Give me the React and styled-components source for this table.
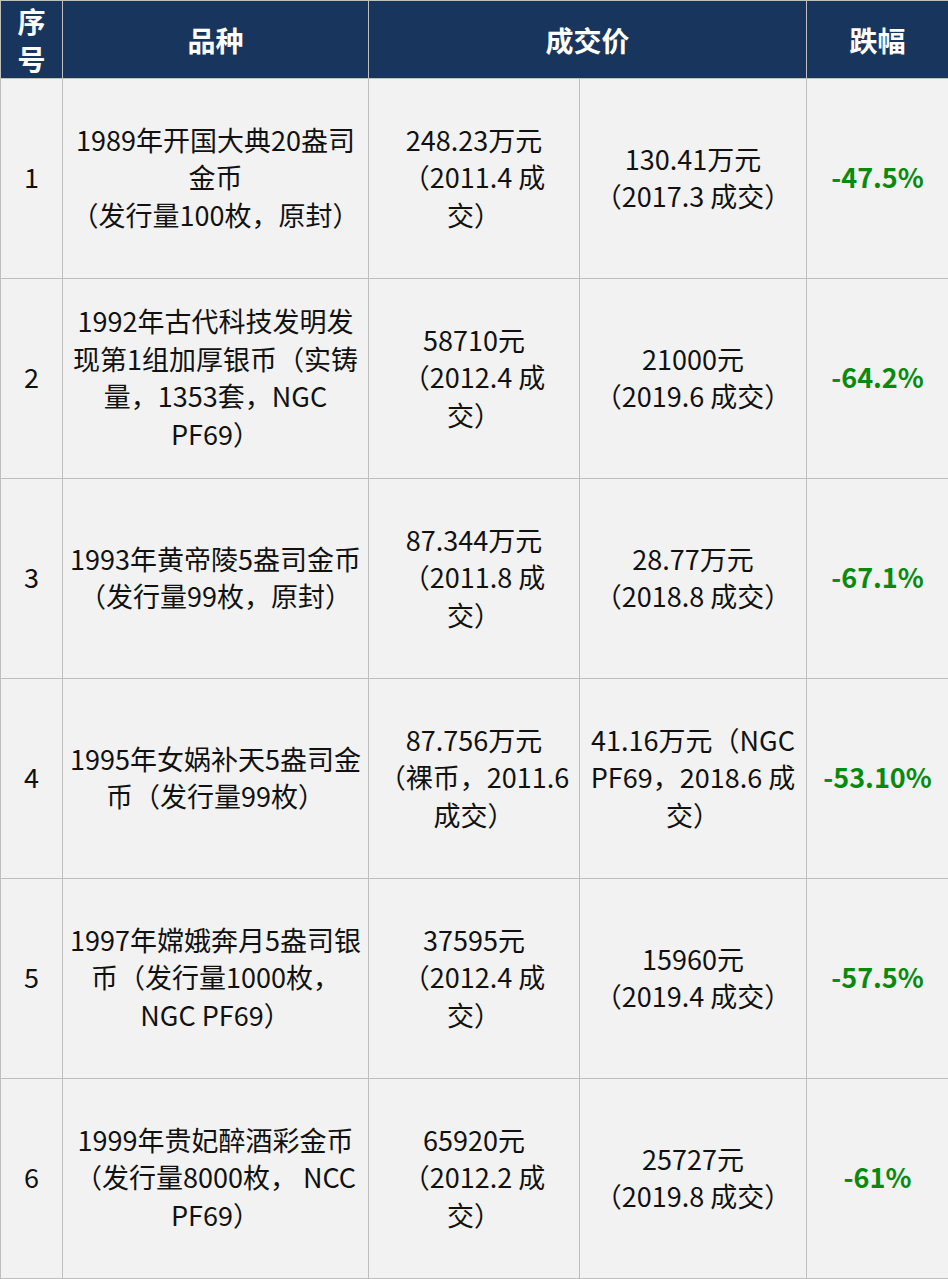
import React from 'react';
import styled, { createGlobalStyle } from 'styled-components';

const GlobalStyle = createGlobalStyle`
  html, body {
    margin: 0;
    padding: 0;
    background: #ffffff;
  }
  body {
    font-family: "Noto Sans CJK SC", "Noto Sans", sans-serif;
  }
`;

const Table = styled.table`
  width: 948px;
  table-layout: fixed;
  border-collapse: collapse;
  font-size: 27px;
  line-height: 37.5px;
  color: #111111;
`;

const HeadCell = styled.th`
  height: 77px;
  padding: 0;
  background: #18365d;
  color: #ffffff;
  font-size: 28px;
  font-weight: 700;
  text-align: center;
  vertical-align: middle;
  border: 1px solid #bfbfbf;
  line-height: ${(p) => (p.$tight ? '38px' : '40px')};
`;

const Cell = styled.td`
  height: 196px;
  padding: 0 0 3px;
  background: #f2f2f2;
  text-align: center;
  vertical-align: middle;
  border: 1px solid #bfbfbf;
  white-space: nowrap;
  font-weight: ${(p) => (p.$bold ? 700 : 400)};
  color: ${(p) => (p.$green ? '#078a0e' : '#111111')};
`;

const Line = styled.div`
  white-space: nowrap;
`;

const rows = [
  {
    name: ['1989年开国大典20盎司', '金币', '（发行量100枚，原封）'],
    before: ['248.23万元', '（2011.4 成', '交）'],
    after: ['130.41万元', '（2017.3 成交）'],
    change: '-47.5%',
  },
  {
    name: ['1992年古代科技发明发', '现第1组加厚银币（实铸', '量，1353套，NGC', 'PF69）'],
    before: ['58710元', '（2012.4 成', '交）'],
    after: ['21000元', '（2019.6 成交）'],
    change: '-64.2%',
  },
  {
    name: ['1993年黄帝陵5盎司金币', '（发行量99枚，原封）'],
    before: ['87.344万元', '（2011.8 成', '交）'],
    after: ['28.77万元', '（2018.8 成交）'],
    change: '-67.1%',
  },
  {
    name: ['1995年女娲补天5盎司金', '币（发行量99枚）'],
    before: ['87.756万元', '（裸币，2011.6', '成交）'],
    after: ['41.16万元（NGC', 'PF69，2018.6 成', '交）'],
    change: '-53.10%',
  },
  {
    name: ['1997年嫦娥奔月5盎司银', '币（发行量1000枚，', 'NGC PF69）'],
    before: ['37595元', '（2012.4 成', '交）'],
    after: ['15960元', '（2019.4 成交）'],
    change: '-57.5%',
  },
  {
    name: ['1999年贵妃醉酒彩金币', '（发行量8000枚， NCC', 'PF69）'],
    before: ['65920元', '（2012.2 成', '交）'],
    after: ['25727元', '（2019.8 成交）'],
    change: '-61%',
  },
];

function Lines({ items }) {
  return items.map((t, i) => <Line key={i}>{t}</Line>);
}

export default function App() {
  return (
    <>
      <GlobalStyle />
      <Table>
        <colgroup>
          <col style={{ width: 62 }} />
          <col style={{ width: 306 }} />
          <col style={{ width: 211 }} />
          <col style={{ width: 227 }} />
          <col style={{ width: 142 }} />
        </colgroup>
        <thead>
          <tr>
            <HeadCell $tight>序<br />号</HeadCell>
            <HeadCell>品种</HeadCell>
            <HeadCell colSpan={2}>成交价</HeadCell>
            <HeadCell>跌幅</HeadCell>
          </tr>
        </thead>
        <tbody>
          {rows.map((r, i) => (
            <tr key={i}>
              <Cell>{i + 1}</Cell>
              <Cell><Lines items={r.name} /></Cell>
              <Cell><Lines items={r.before} /></Cell>
              <Cell><Lines items={r.after} /></Cell>
              <Cell $bold $green>{r.change}</Cell>
            </tr>
          ))}
        </tbody>
      </Table>
    </>
  );
}
